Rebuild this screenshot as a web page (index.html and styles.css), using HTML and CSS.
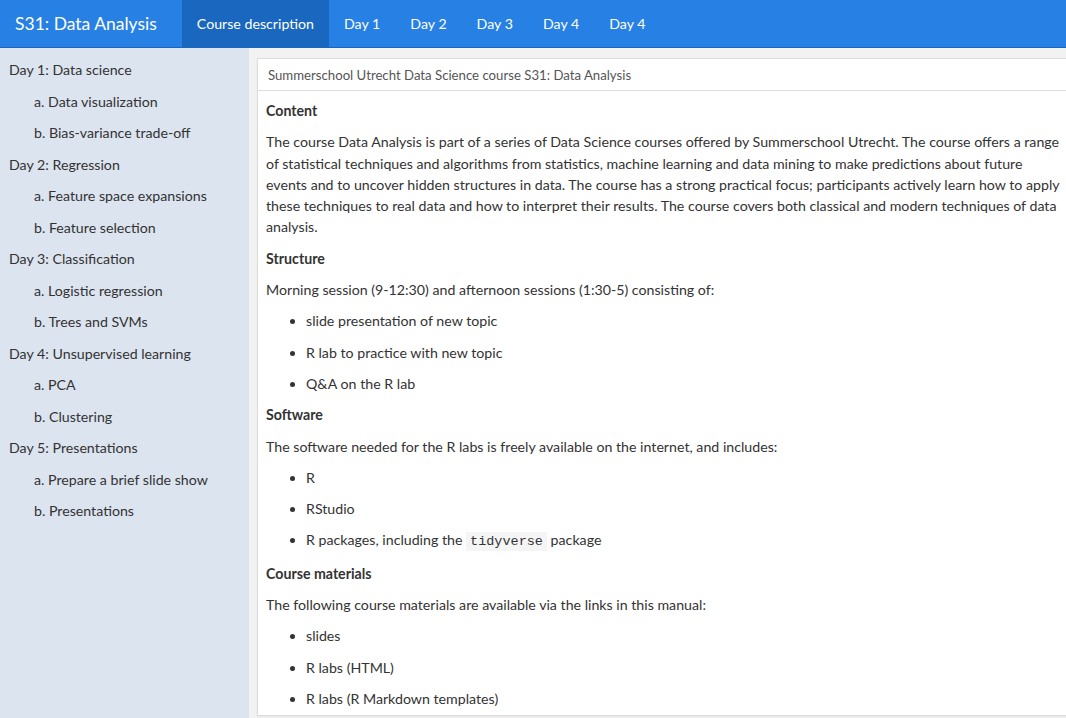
FILE: index.html
```html
<!DOCTYPE html>
<html>
<head>
<meta charset="utf-8">
<link rel="stylesheet" href="styles.css">
</head>
<body>
<nav class="navbar">
  <div class="brand">S31: Data Analysis</div>
  <ul class="nav">
    <li class="active">Course description</li>
    <li>Day 1</li>
    <li>Day 2</li>
    <li>Day 3</li>
    <li>Day 4</li>
    <li>Day 4</li>
  </ul>
</nav>
<div class="layout">
  <aside class="sidebar">
    <div class="day">Day 1: Data science</div>
    <div class="sub">a. Data visualization</div>
    <div class="sub">b. Bias-variance trade-off</div>
    <div class="day">Day 2: Regression</div>
    <div class="sub">a. Feature space expansions</div>
    <div class="sub">b. Feature selection</div>
    <div class="day">Day 3: Classification</div>
    <div class="sub">a. Logistic regression</div>
    <div class="sub">b. Trees and SVMs</div>
    <div class="day">Day 4: Unsupervised learning</div>
    <div class="sub">a. PCA</div>
    <div class="sub">b. Clustering</div>
    <div class="day">Day 5: Presentations</div>
    <div class="sub">a. Prepare a brief slide show</div>
    <div class="sub">b. Presentations</div>
  </aside>
  <main class="main">
    <section class="card">
      <div class="card-title">Summerschool Utrecht Data Science course S31: Data Analysis</div>
      <div class="card-body">
        <p><strong>Content</strong></p>
        <p>The course Data Analysis is part of a series of Data Science courses offered by Summerschool Utrecht. The course offers a range of statistical techniques and algorithms from statistics, machine learning and data mining to make predictions about future events and to uncover hidden structures in data. The course has a strong practical focus; participants actively learn how to apply these techniques to real data and how to interpret their results. The course covers both classical and modern techniques of data analysis.</p>
        <p><strong>Structure</strong></p>
        <p>Morning session (9-12:30) and afternoon sessions (1:30-5) consisting of:</p>
        <ul>
          <li>slide presentation of new topic</li>
          <li>R lab to practice with new topic</li>
          <li>Q&amp;A on the R lab</li>
        </ul>
        <p><strong>Software</strong></p>
        <p>The software needed for the R labs is freely available on the internet, and includes:</p>
        <ul>
          <li>R</li>
          <li>RStudio</li>
          <li>R packages, including the <code>tidyverse</code> package</li>
        </ul>
        <p><strong>Course materials</strong></p>
        <p>The following course materials are available via the links in this manual:</p>
        <ul>
          <li>slides</li>
          <li>R labs (HTML)</li>
          <li>R labs (R Markdown templates)</li>
        </ul>
      </div>
    </section>
  </main>
</div>
</body>
</html>
```
FILE: styles.css
```css
* { box-sizing: border-box; }
html, body { margin: 0; padding: 0; height: 100%; overflow: hidden; }
body {
  font-family: "Lato", "Liberation Sans", sans-serif;
  font-size: 14.2px;
  line-height: 21.43px;
  color: #333;
  background: #f2f2f2;
}
.navbar {
  display: flex;
  align-items: stretch;
  height: 48px;
  background: #2780e3;
  border-bottom: 1px solid #1967be;
  color: #fff;
}
.brand {
  font-size: 17.5px;
  padding: 0 25px 0 15px;
  display: flex;
  align-items: center;
}
.nav {
  display: flex;
  list-style: none;
  margin: 0;
  padding: 0;
}
.nav li {
  display: flex;
  align-items: center;
  padding: 0 15px;
  margin: 0;
  font-size: 14.2px;
}
.nav li.active { background: #1967be; }
.layout {
  display: flex;
  height: calc(100% - 48px);
}
.sidebar {
  width: 249px;
  flex: none;
  background: #dce4ef;
  padding: 11px 0 0 9px;
}
.sidebar div { margin-bottom: 10.1px; }
.sidebar .sub { padding-left: 25px; }
.main {
  flex: 1;
  padding: 10px 0 2px 8px;
  overflow: hidden;
}
.card {
  background: #fff;
  border: 1px solid #ddd;
  border-right: none;
  height: 100%;
  margin-right: -2px;
  box-shadow: 0 1px 2px rgba(0,0,0,0.06);
}
.card-title {
  font-size: 13.2px;
  color: #555;
  height: 32px;
  display: flex;
  align-items: center;
  padding: 2px 10px 0;
  border-bottom: 1px solid #ddd;
}
.card-body {
  padding: 9px 8px 0 8px;
  line-height: 21.3px;
}
p { margin: 0 0 10px; }
ul { margin: 0; padding-left: 40px; }
.card-body li { margin-bottom: 10px; }
code {
  font-family: "Liberation Mono", monospace;
  font-size: 13.5px;
  background: #f5f5f5;
  padding: 2px 4px;
  color: #333;
}
```
